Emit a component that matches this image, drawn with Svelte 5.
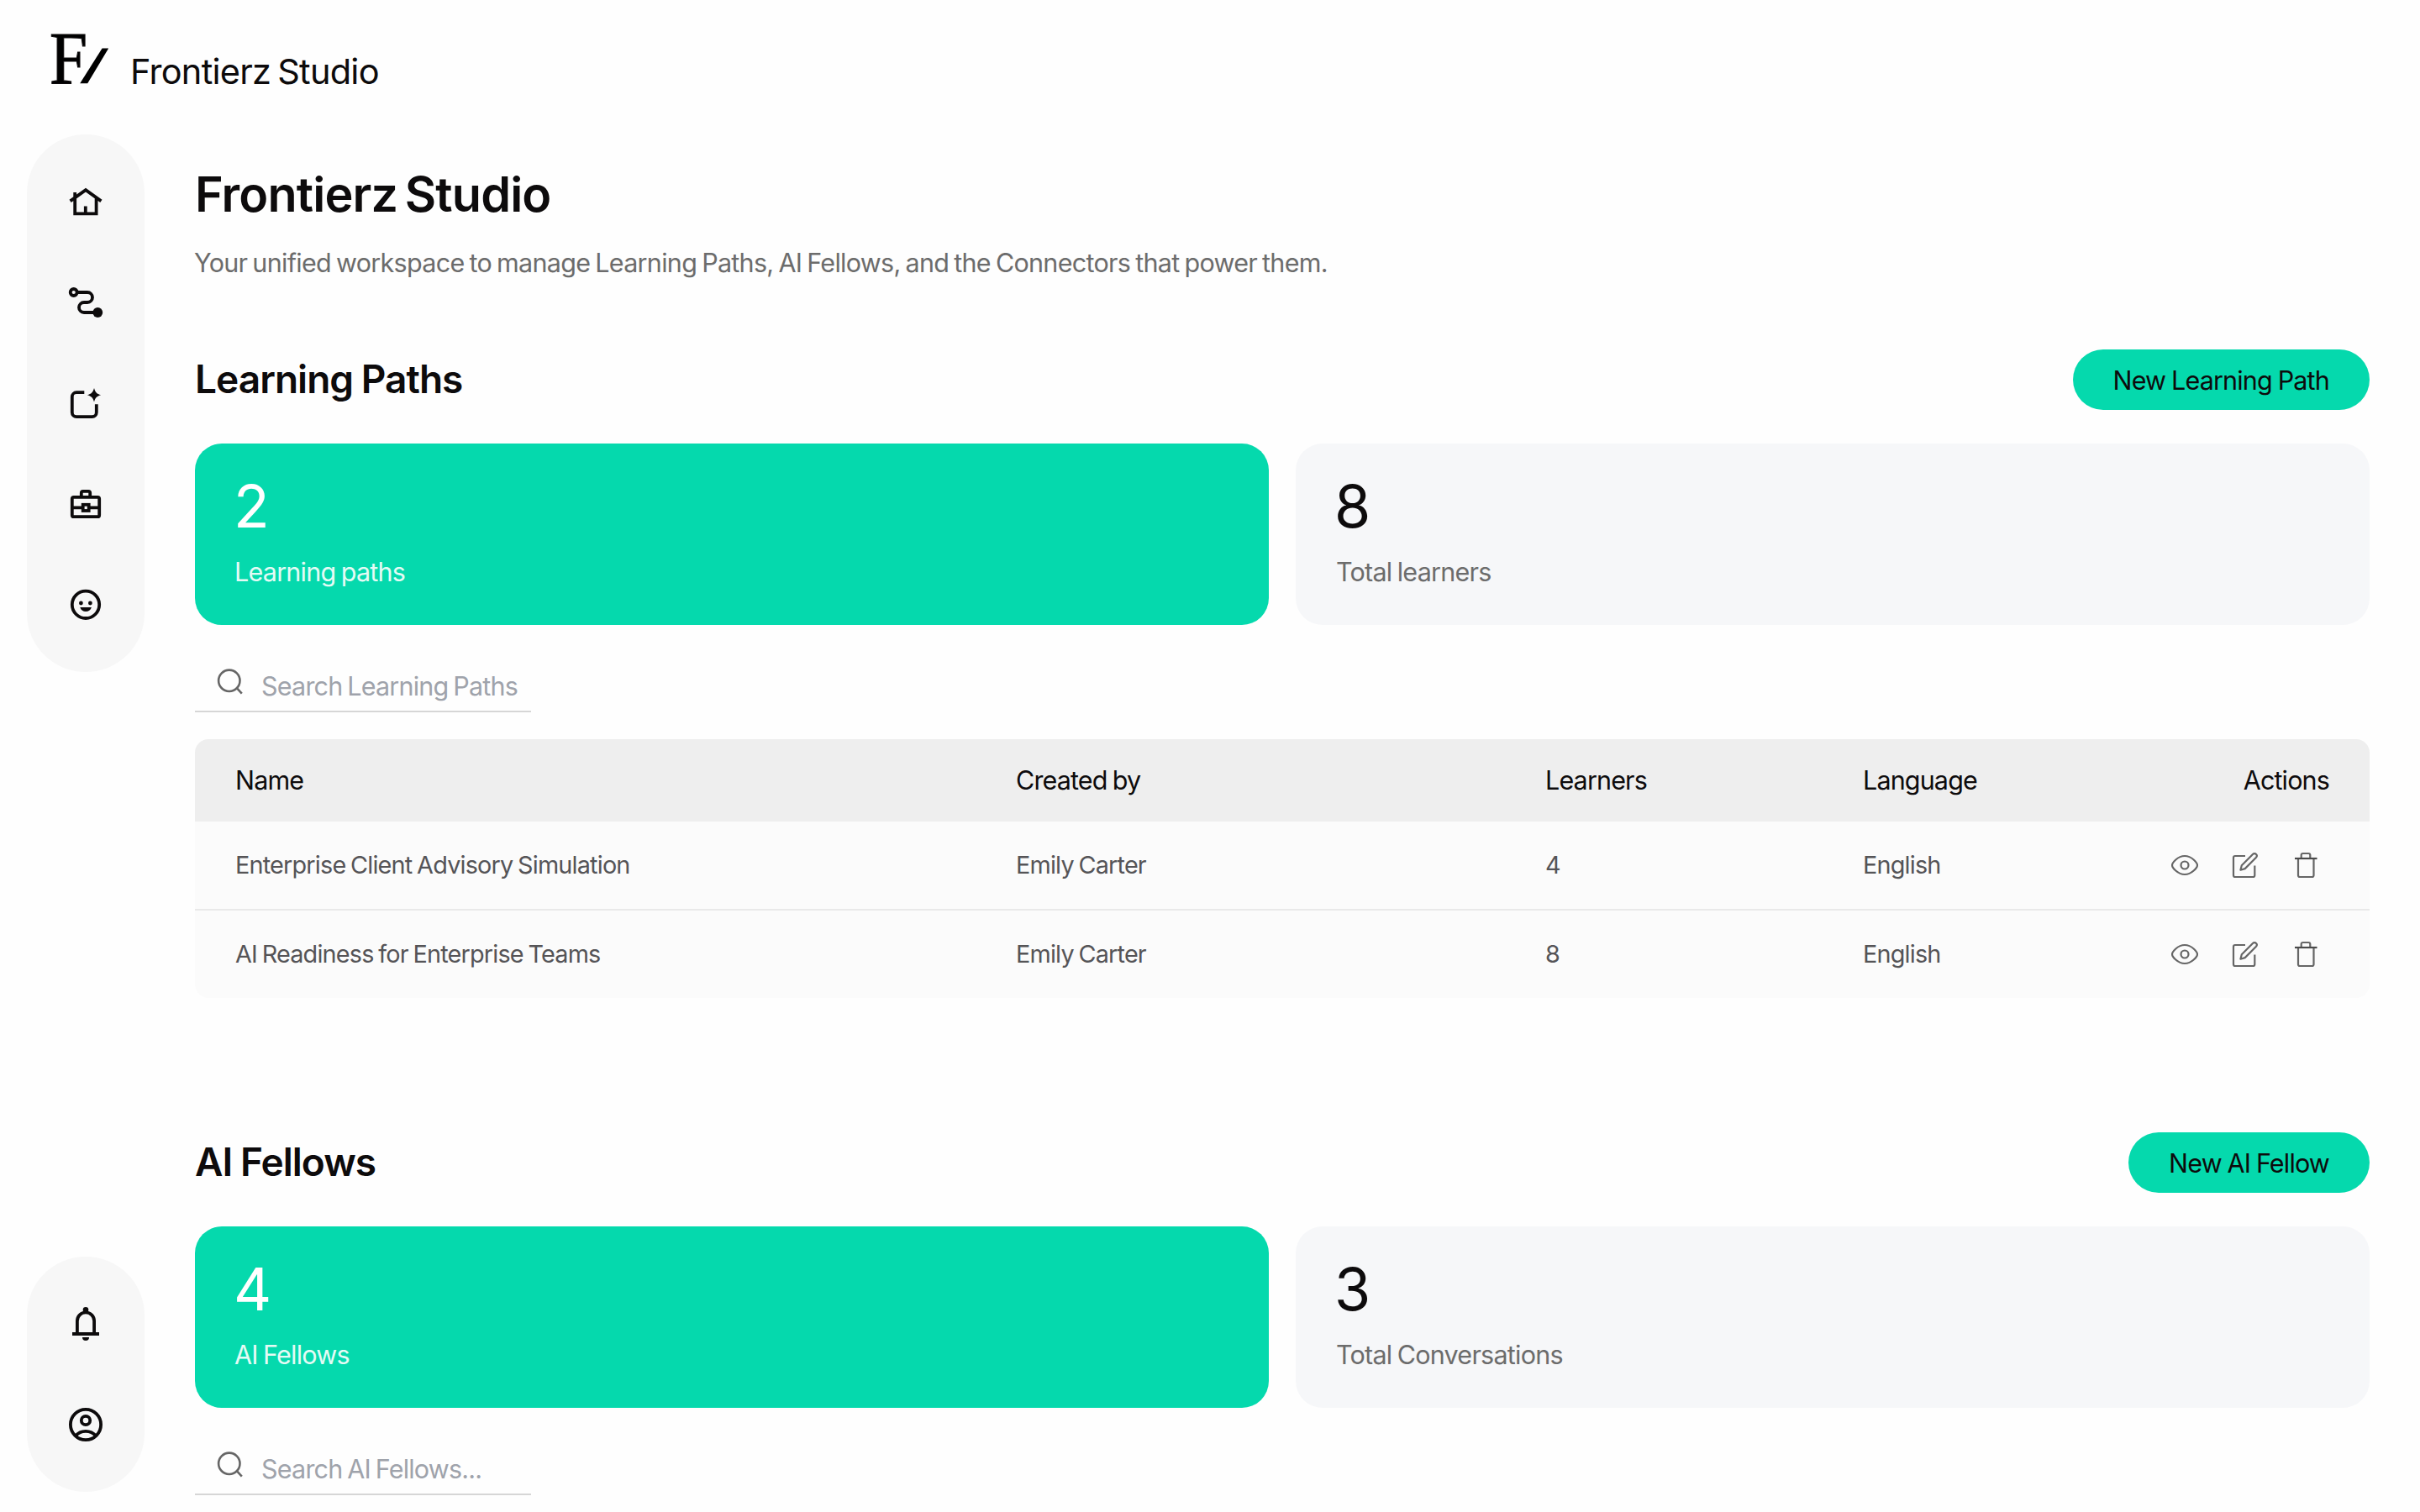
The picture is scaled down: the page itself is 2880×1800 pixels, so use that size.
<script lang="ts">
    type Row = {
        name: string;
        createdBy: string;
        learners: number;
        language: string;
    };

    type Section = {
        id: string;
        title: string;
        action: string;
        stats: { value: number; label: string }[];
        search: string;
        rows: Row[];
    };

    const mainNav = ["home", "paths", "fellows", "toolkit", "community"];
    const userNav = ["notifications", "account"];

    const sections: Section[] = [
        {
            id: "paths",
            title: "Learning Paths",
            action: "New Learning Path",
            stats: [
                { value: 2, label: "Learning paths" },
                { value: 8, label: "Total learners" }
            ],
            search: "Search Learning Paths",
            rows: [
                { name: "Enterprise Client Advisory Simulation", createdBy: "Emily Carter", learners: 4, language: "English" },
                { name: "AI Readiness for Enterprise Teams", createdBy: "Emily Carter", learners: 8, language: "English" }
            ]
        },
        {
            id: "fellows",
            title: "AI Fellows",
            action: "New AI Fellow",
            stats: [
                { value: 4, label: "AI Fellows" },
                { value: 3, label: "Total Conversations" }
            ],
            search: "Search AI Fellows...",
            rows: []
        }
    ];
</script>

{#snippet navIcon(name: string)}
    <svg class="nav-icon" viewBox="0 0 48 48" aria-hidden="true">
        {#if name === "home"}
            <path d="M5.6 23.4 24 10.2l18.4 13.2M11.2 13v25.3h25.4V20.5M23.8 29.5v8.5" />
        {:else if name === "paths"}
            <circle cx="9.7" cy="12" r="4" />
            <path d="M14 12h12a6 6 0 0 1 0 12h-4a6 6 0 0 0 0 12h16" />
            <circle class="solid" cx="38.3" cy="36" r="5.9" />
        {:else if name === "fellows"}
            <path d="M22.3 11.2H13a5.2 5.2 0 0 0-5.2 5.2V35a5.2 5.2 0 0 0 5.2 5.2h18.6a5.2 5.2 0 0 0 5.2-5.2v-9.7" />
            <path class="solid" d="M34 6c1.4 5 3.2 6.9 8.1 8.3-4.9 1.4-6.7 3.2-8.1 8.2-1.4-5-3.2-6.8-8.1-8.2C30.8 12.9 32.6 11 34 6z" />
        {:else if name === "toolkit"}
            <rect x="7.8" y="15.8" width="32.4" height="23.4" rx="2" />
            <path d="M18.8 15v-4.2a2 2 0 0 1 2-2h6.4a2 2 0 0 1 2 2V15M8 28.4h12M28.5 28.4H40" />
            <rect x="20.7" y="24.8" width="7" height="7.2" />
        {:else if name === "community"}
            <circle cx="24" cy="23.8" r="16.2" />
            <circle class="solid" cx="18.4" cy="22" r="2.4" />
            <circle class="solid" cx="29.4" cy="22" r="2.4" />
            <path class="solid" d="M17.3 27h13.6c-1 3.2-3.6 5-6.8 5s-5.8-1.8-6.8-5z" />
        {:else if name === "notifications"}
            <circle class="solid" cx="24" cy="7.2" r="3.3" />
            <path d="M13.9 36V20.5a10.1 10.1 0 0 1 20.2 0V36M8 36h32" />
            <path class="solid" d="M20 40h8a4 4 0 0 1-8 0z" />
        {:else}
            <circle cx="24" cy="24" r="18.1" />
            <circle cx="24" cy="19" r="5.2" />
            <path d="M12 37.3c3-3.6 7.2-5.4 12-5.4s9 1.8 12 5.4" />
        {/if}
    </svg>
{/snippet}

<div class="app">
    <header class="topbar">
        <svg class="logo" viewBox="0 0 70 60" aria-hidden="true">
            <text x="-1" y="58.5" textLength="45" lengthAdjust="spacingAndGlyphs">F</text>
            <path d="M35.2 59.3h9L69.2 17.4h-7.6z" />
        </svg>
        <span class="brand">Frontierz Studio</span>
    </header>

    <aside class="sidebar">
        <nav class="dock" aria-label="Main">
            {#each mainNav as item}
                <button class="nav-item" aria-label={item}>{@render navIcon(item)}</button>
            {/each}
        </nav>
        <nav class="dock" aria-label="User">
            {#each userNav as item}
                <button class="nav-item" aria-label={item}>{@render navIcon(item)}</button>
            {/each}
        </nav>
    </aside>

    <main class="content">
        <h1>Frontierz Studio</h1>
        <p class="intro">
            Your unified workspace to manage Learning Paths, AI Fellows, and the Connectors that power them.
        </p>

        {#each sections as s (s.id)}
            <section class="section">
                <div class="section-head">
                    <h2>{s.title}</h2>
                    <button class="primary">{s.action}</button>
                </div>

                <div class="stats">
                    {#each s.stats as stat, i}
                        <div class="card" class:accent={i === 0}>
                            <div class="value">{stat.value}</div>
                            <div class="label">{stat.label}</div>
                        </div>
                    {/each}
                </div>

                <div class="search">
                    <svg class="search-icon" viewBox="0 0 32 32" aria-hidden="true">
                        <circle cx="14.8" cy="14.3" r="12.7" />
                        <path d="M23.8 23.2l6 6.4" />
                    </svg>
                    <span class="placeholder">{s.search}</span>
                </div>

                {#if s.rows.length}
                    <div class="table">
                        <div class="row head">
                            <span>Name</span>
                            <span>Created by</span>
                            <span>Learners</span>
                            <span>Language</span>
                            <span class="right">Actions</span>
                        </div>
                        {#each s.rows as row}
                            <div class="row">
                                <span>{row.name}</span>
                                <span>{row.createdBy}</span>
                                <span>{row.learners}</span>
                                <span>{row.language}</span>
                                <div class="actions">
                                    <svg viewBox="0 0 32 32" aria-label="View">
                                        <path d="M1 16c0-2.8 6.5-11 15-11s15 8.2 15 11-6.5 11-15 11S1 18.800 1 16z" />
                                        <circle cx="16" cy="16" r="4.5" />
                                    </svg>
                                    <svg viewBox="0 0 32 32" aria-label="Edit">
                                        <path d="M16 5H4a2 2 0 0 0-2 2v21a2 2 0 0 0 2 2h21.3a2 2 0 0 0 2-2V16.5" />
                                        <path d="M10.4 21.7l1.4-5.400L25 3c1.3-1.3 3-1 4 0s1.1 2.6 0 3.8L15.7 20.1z" />
                                    </svg>
                                    <svg viewBox="0 0 32 32" aria-label="Delete">
                                        <path d="M7 8.5V28a2 2 0 0 0 2 2h14.500a2 2 0 0 0 2-2V8.5M10.7 8V4a2 2 0 0 1 2-2h6.600a2 2 0 0 1 2 2v4" />
                                        <path class="lid" d="M3 8h26.5" />
                                    </svg>
                                </div>
                            </div>
                        {/each}
                    </div>
                {/if}
            </section>
        {/each}
    </main>
</div>

<style>
    :global(body) {
        background: #fefefe;
        overflow: hidden;
    }

    .app {
        display: grid;
        grid-template: 160px minmax(0, 1fr) / 232px minmax(0, 1fr);
        height: 1800px;
        overflow: hidden;
        font-family: Inter, "Liberation Sans", sans-serif;
        color: #0d0b0c;
    }

    button {
        border: 0;
        padding: 0;
        background: none;
        font: inherit;
        color: inherit;
        cursor: pointer;
    }

    /* Top bar */
    .topbar {
        grid-column: 1 / -1;
        display: flex;
        align-items: flex-start;
        gap: 25px;
        padding: 40px 60px 0;
    }
    .logo {
        width: 70px;
        height: 60px;
        overflow: visible;
    }
    .logo text {
        font-family: "Liberation Serif", serif;
        font-size: 88px;
        stroke: #0d0b0c;
        stroke-width: 1.2;
    }
    .brand {
        margin-top: 21px;
        font-size: 41.5px;
        line-height: 48px;
        letter-spacing: -0.018em;
        word-spacing: -3px;
    }

    /* Sidebar */
    .sidebar {
        display: flex;
        flex-direction: column;
        justify-content: space-between;
        width: 140px;
        margin-left: 32px;
        padding-bottom: 24px;
    }
    .dock {
        display: flex;
        flex-direction: column;
        padding: 20px 0;
        border-radius: 70px;
        background: #f7f7f7;
    }
    .nav-item {
        display: grid;
        place-items: center;
        height: 120px;
    }
    .nav-icon {
        width: 48px;
        height: 48px;
        fill: none;
        stroke: #0d0b0c;
        stroke-width: 3.8;
    }
    .nav-icon .solid {
        fill: #0d0b0c;
        stroke: none;
    }

    /* Content */
    .content {
        min-width: 0;
        padding: 35px 60px 0 0;
    }
    h1 {
        margin: 0;
        font-size: 57.5px;
        font-weight: 600;
        line-height: 72px;
        letter-spacing: -0.015em;
        word-spacing: -5px;
    }
    .intro {
        margin: 22px 0 79px -1px;
        font-size: 30.5px;
        line-height: 48px;
        letter-spacing: -0.023em;
        word-spacing: -1.9px;
        color: #6c6c6c;
    }
    .section {
        margin-bottom: 160px;
    }
    .section-head {
        display: flex;
        align-items: center;
        justify-content: space-between;
        height: 72px;
        margin-bottom: 40px;
    }
    h2 {
        margin: -2px 0 0;
        font-size: 46px;
        font-weight: 600;
        letter-spacing: -0.021em;
        word-spacing: -1px;
    }
    .primary {
        height: 72px;
        padding: 1px 48px 0;
        border-radius: 36px;
        background: #05d9ad;
        font-size: 30.5px;
        letter-spacing: -0.027em;
        word-spacing: -1px;
    }

    .stats {
        display: grid;
        grid-template-columns: 1fr 1fr;
        gap: 32px;
    }
    .card {
        height: 216px;
        padding: 35px 47px 0 48px;
        box-sizing: border-box;
        border-radius: 32px;
        background: #f6f7f9;
    }
    .card.accent {
        background: #05d9ad;
        color: #fff;
    }
    .value {
        margin-left: -2px;
        font-size: 70px;
        line-height: 80px;
    }
    .label {
        margin-top: 14px;
        font-size: 30.5px;
        line-height: 48px;
        letter-spacing: -0.025em;
        word-spacing: -1.5px;
        color: #6c6c6c;
    }
    .accent .label {
        margin-left: -1px;
        color: #e4fbf5;
    }

    .search {
        display: flex;
        align-items: center;
        gap: 21px;
        width: 400px;
        height: 72px;
        margin: 32px 0;
        padding: 0 14px 0 26px;
        box-sizing: border-box;
        border-bottom: 2px solid #d6d6d6;
    }
    .search-icon {
        flex: none;
        width: 32px;
        height: 32px;
        margin-top: 2px;
        fill: none;
        stroke: #666;
        stroke-width: 2.6;
    }
    .placeholder {
        padding-top: 12px;
        font-size: 30.5px;
        line-height: 48px;
        letter-spacing: -0.026em;
        word-spacing: -2px;
        color: #9fa3ab;
        white-space: nowrap;
        overflow: hidden;
    }

    /* Table */
    .table {
        border-radius: 16px;
        overflow: hidden;
        background: #fbfbfb;
    }
    .row {
        display: grid;
        grid-template-columns: 929px 630px 378px 1fr 220px;
        align-items: center;
        height: 104px;
        padding: 0 48px;
        font-size: 28.8px;
        letter-spacing: -0.028em;
        word-spacing: -1.6px;
        color: #555457;
    }
    .row > span {
        padding-bottom: 1px;
    }
    .row + .row + .row {
        border-top: 2px solid #e9e9e9;
    }
    .row.head {
        height: 98px;
        background: #eee;
        font-size: 30.5px;
        color: #0d0b0c;
    }
    .row .right {
        text-align: right;
    }
    .actions {
        display: flex;
        justify-content: flex-end;
        gap: 40px;
        padding-right: 12px;
    }
    .actions svg {
        width: 32px;
        height: 32px;
        fill: none;
        stroke: #666;
        stroke-width: 2.2;
        stroke-linejoin: round;
    }
    .actions .lid {
        stroke: #4a4a4a;
    }
</style>
